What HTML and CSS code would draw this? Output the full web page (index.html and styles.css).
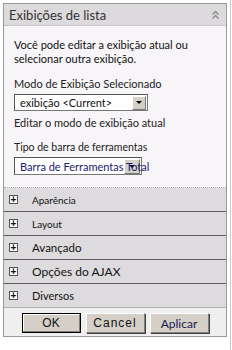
FILE: index.html
```html
<!DOCTYPE html>
<html lang="pt-br">
<head>
    <meta charset="UTF-8">
    <meta name="viewport" content="width=device-width, initial-scale=1.0">
    <title>Exibições de lista</title>
    <link rel="stylesheet" href="styles.css">
</head>
<body>
    <div class="pagina">
        <div class="painel">
            <div class="cabecalho">
                <p class="titulo">Exibições de lista</p>
                <svg class="seta" width="7" height="8" viewBox="0 0 7 8">
                    <polyline points="0.5,3.5 3.5,0.5 6.5,3.5" fill="none" stroke="#8a8a8a" stroke-width="1.3"/>
                    <polyline points="0.5,7.5 3.5,4.5 6.5,7.5" fill="none" stroke="#8a8a8a" stroke-width="1.3"/>
                </svg>
            </div>
            <div class="conteudo">
                <p class="texto">Você pode editar a exibição atual ou selecionar outra exibição.</p>
                <p class="rotulo">Modo de Exibição Selecionado</p>
                <div class="caixa caixa_modo">
                    <span class="caixa_texto">exibição &lt;Current&gt;</span>
                    <span class="caixa_botao"><span class="tri"></span></span>
                </div>
                <p class="link">Editar o modo de exibição atual</p>
                <p class="rotulo rotulo_menor">Tipo de barra de ferramentas</p>
                <div class="caixa caixa_barra">
                    <span class="caixa_texto">Barra de Ferramentas Total</span>
                    <span class="caixa_botao botao_largo"><span class="tri"></span></span>
                </div>
            </div>
            <div class="secao sec_pequena"><span class="mais">+</span><span>Aparência</span></div>
            <div class="secao sec_pequena"><span class="mais">+</span><span>Layout</span></div>
            <div class="secao sec_avancado"><span class="mais">+</span><span>Avançado</span></div>
            <div class="secao"><span class="mais">+</span><span>Opções do AJAX</span></div>
            <div class="secao sec_media"><span class="mais">+</span><span>Diversos</span></div>
            <div class="botoes">
                <button class="botao botao_ok">OK</button>
                <button class="botao botao_cancel">Cancel</button>
                <button class="botao botao_aplicar">Aplicar</button>
            </div>
        </div>
    </div>
</body>
</html>
```
FILE: styles.css
```css
*{
    padding: 0px;
    margin: 0px;
    box-sizing: border-box;
}
body{
    background-color: #fff;
    font-family: Lato, "Liberation Sans", sans-serif;
    color: #222;
}
.pagina{
    width: 231px;
    height: 350px;
    border-right: 1px solid #c8c8c8;
    padding: 3px 0 0 3px;
}
.painel{
    width: 224px;
    border: 1px solid #9a9a9a;
}
.cabecalho{
    display: flex;
    justify-content: space-between;
    align-items: center;
    height: 22px;
    background-color: #dcdadc;
    border-bottom: 1px dotted #b4b2b4;
    padding: 0 7px 0 5px;
}
.titulo{
    font-size: 13px;
    color: #333;
}
.conteudo{
    background-color: #f8f5f8;
    padding: 12px 0 12px 10px;
    border-bottom: 1px dotted #aaa;
}
.texto{
    font-size: 11px;
    line-height: 14px;
    color: #111;
    width: 200px;
}
.rotulo{
    font-size: 11px;
    line-height: 14px;
    margin-top: 11px;
    color: #222;
}
.rotulo_menor{
    font-size: 10.5px;
    margin-top: 10px;
}
.link{
    font-size: 11px;
    line-height: 14px;
    margin-top: 5px;
    color: #222;
}
.caixa{
    display: flex;
    align-items: center;
    height: 17px;
    background-color: #fff;
    border: 1px solid #777;
    border-top-color: #555;
    border-left-color: #555;
    margin-top: 3px;
}
.caixa_modo{
    width: 134px;
}
.caixa_barra{
    width: 128px;
    height: 18px;
}
.caixa_texto{
    flex: 1;
    font-size: 11px;
    padding-left: 5px;
    white-space: nowrap;
    color: #111;
}
.caixa_barra .caixa_texto{
    width: 109px;
    flex: none;
    position: relative;
    z-index: 1;
    color: #1a1a70;
}
.caixa_botao{
    display: flex;
    justify-content: center;
    align-items: center;
    width: 14px;
    height: 14px;
    margin-right: 1px;
    background-color: #d4d0c8;
    border: 1px solid #777;
    border-top-color: #fff;
    border-left-color: #fff;
}
.botao_largo{
    width: 17px;
    height: 15px;
}
.tri{
    width: 0;
    height: 0;
    border-left: 3px solid transparent;
    border-right: 3px solid transparent;
    border-top: 3px solid #000;
}
.secao{
    display: flex;
    align-items: center;
    height: 24px;
    background-color: #dddbdd;
    border-bottom: 1px solid #5a5a5a;
    font-size: 12px;
    color: #111;
    padding-left: 5px;
}
.sec_pequena{
    font-size: 10px;
}
.sec_avancado{
    font-size: 11.5px;
}
.sec_media{
    font-size: 11px;
    border-bottom: 1px solid #b0b0b0;
}
.mais{
    display: flex;
    justify-content: center;
    align-items: center;
    width: 9px;
    height: 9px;
    border: 1px solid #555;
    background-color: #fff;
    font-family: "Liberation Sans", sans-serif;
    font-size: 10px;
    line-height: 9px;
    font-weight: bold;
    margin-right: 14px;
}
.botoes{
    display: flex;
    justify-content: center;
    gap: 5px;
    background-color: #f0eff0;
    padding: 5px 0 3px 0;
}
.botao{
    width: 59px;
    height: 20px;
    background-color: #d4d0c8;
    border: 1px solid #808080;
    border-top-color: #fff;
    border-left-color: #fff;
    box-shadow: 1px 1px 0 #404040;
    font-family: "Liberation Sans", Arial, sans-serif;
    font-size: 12px;
    color: #111;
}
.botao_ok{
    border: 1px solid #000;
    box-shadow: inset -1px -1px 0 #808080, inset 1px 1px 0 #fff;
}
.botao_cancel{
    letter-spacing: 1px;
}
.botao_aplicar{
    font-family: Lato, sans-serif;
    color: #1a1a50;
}
```
